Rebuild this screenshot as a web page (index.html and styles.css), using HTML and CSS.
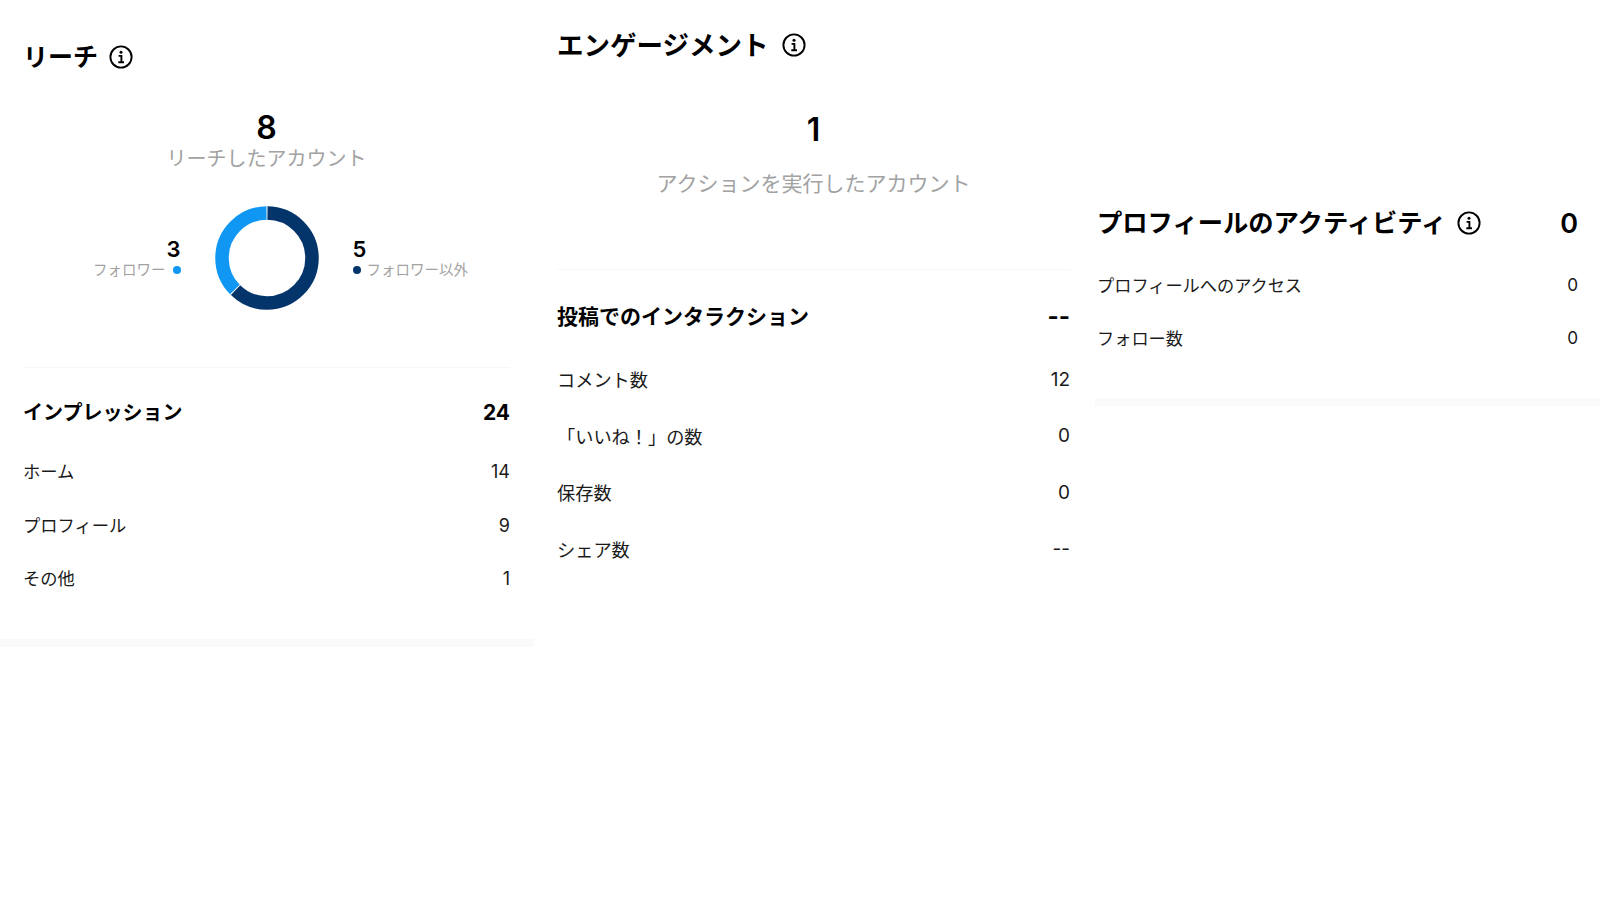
FILE: index.html
```html
<!DOCTYPE html>
<html lang="ja">
<head>
<meta charset="utf-8">
<title>インサイト</title>
<link rel="stylesheet" href="styles.css">
</head>
<body>
<svg class="defs" width="0" height="0" aria-hidden="true">
  <symbol id="info" viewBox="0 0 24 24">
    <circle class="info-ring" cx="12" cy="12" r="10.6"/>
    <circle class="info-dot" cx="12" cy="7.3" r="1.5"/>
    <path class="info-stem" d="M9.6 10.9H12.4V17M9.3 17.2H15"/>
  </symbol>
</svg>
<main class="page">
  <section class="col col-reach">
    <h2 class="title title-reach">リーチ <svg class="info"><use href="#info"/></svg></h2>
    <div class="big big-reach">8</div>
    <div class="sub sub-reach">リーチしたアカウント</div>
    <div class="chart">
      <div class="legend legend-left">
        <div class="legend-num">3</div>
        <div class="legend-label">フォロワー<span class="dot dot-light"></span></div>
      </div>
      <svg class="donut" viewBox="0 0 104 104">
        <circle class="seg seg-navy" cx="52" cy="52" r="45" pathLength="100" stroke-dasharray="62.5 37.5" transform="rotate(-90 52 52)"/>
        <circle class="seg seg-blue" cx="52" cy="52" r="45" pathLength="100" stroke-dasharray="37.5 62.5" stroke-dashoffset="-62.5" transform="rotate(-90 52 52)"/>
        <circle class="seg seg-gap" cx="52" cy="52" r="45" pathLength="100" stroke-dasharray="0.35 62.15 0.35 37.15" stroke-dashoffset="0.175" transform="rotate(-90 52 52)"/>
      </svg>
      <div class="legend legend-right">
        <div class="legend-num">5</div>
        <div class="legend-label"><span class="dot dot-navy"></span>フォロワー以外</div>
      </div>
    </div>
    <hr class="rule rule-reach">
    <div class="row head head-reach"><span class="head-text">インプレッション</span><span class="head-num">24</span></div>
    <div class="row r-reach first-reach"><span>ホーム</span><span class="num">14</span></div>
    <div class="row r-reach"><span>プロフィール</span><span class="num">9</span></div>
    <div class="row r-reach"><span>その他</span><span class="num">1</span></div>
  </section>
  <section class="col col-eng">
    <h2 class="title title-eng">エンゲージメント <svg class="info"><use href="#info"/></svg></h2>
    <div class="big big-eng">1</div>
    <div class="sub sub-eng">アクションを実行したアカウント</div>
    <hr class="rule rule-eng">
    <div class="row head head-eng"><span>投稿でのインタラクション</span><span class="dash">--</span></div>
    <div class="row r-eng first-eng"><span>コメント数</span><span class="num-eng">12</span></div>
    <div class="row r-eng"><span>「いいね！」の数</span><span class="num-eng">0</span></div>
    <div class="row r-eng"><span>保存数</span><span class="num-eng">0</span></div>
    <div class="row r-eng"><span>シェア数</span><span class="num-eng">--</span></div>
  </section>
  <section class="col col-prof">
    <div class="row title title-prof">
      <span class="title-left">プロフィールのアクティビティ <svg class="info"><use href="#info"/></svg></span>
      <span class="prof-num">0</span>
    </div>
    <div class="row r-prof first-prof"><span>プロフィールへのアクセス</span><span>0</span></div>
    <div class="row r-prof"><span>フォロー数</span><span>0</span></div>
  </section>
</main>
</body>
</html>
```

FILE: styles.css
```css
* { box-sizing: border-box; }
html, body { margin: 0; height: 100%; background: #fff; }
body {
  font-family: Inter, "Noto Sans CJK JP", sans-serif;
  color: #000;
  overflow: hidden;
}
.defs { position: absolute; }
.page { display: flex; align-items: flex-start; width: 1600px; height: 900px; }
.col { display: flex; flex-direction: column; }

.col-reach {
  width: 534px;
  padding: 42px 24px 0 23px;
  height: 647px;
  border-bottom: 8px solid #fafafa;
}
.col-eng { width: 561px; padding: 30px 25px 0 23px; }
.col-prof {
  width: 505px;
  margin-top: 208px;
  height: 198px;
  padding: 0 22px 0 2px;
  border-bottom: 8px solid #fafafa;
}

.title {
  margin: 0;
  font-weight: 700;
  font-size: 25px;
  line-height: 30px;
  color: #000;
  display: flex;
  align-items: center;
}
.title-eng { font-size: 26.5px; }
.title-eng .info { margin-left: 14px; }
.title-prof { font-size: 25.3px; }
.title-left { display: flex; align-items: center; }
.info { width: 24px; height: 24px; margin-left: 11px; flex: none; }
.info-ring { fill: none; stroke: #000; stroke-width: 1.9; }
.info-dot { fill: #000; }
.info-stem { fill: none; stroke: #000; stroke-width: 1.9; }

.big { text-align: center; font-weight: 600; font-size: 32px; line-height: 38px; color: #000; }
.big-reach { margin-top: 37px; }
.big-eng { margin-top: 51px; }
.sub { text-align: center; font-size: 20px; line-height: 28px; color: #a2a2a2; }
.sub-reach { margin-top: -2px; }
.sub-eng { margin-top: 21px; font-size: 21px; }

.chart {
  position: relative;
  display: flex;
  justify-content: center;
  margin-top: 33px;
}
.donut { display: block; width: 104px; height: 104px; }
.seg { fill: none; stroke-width: 13.5; }
.seg-navy { stroke: #03356b; }
.seg-blue { stroke: #1097f3; }
.seg-gap { stroke: #fff; }

.legend { width: 140px; padding-top: 29px; }
.legend-left { text-align: right; margin-right: 34px; }
.legend-right { text-align: left; margin-left: 34px; }
.legend-num { font-size: 22px; line-height: 28px; font-weight: 600; color: #000; }
.legend-label {
  display: flex;
  align-items: center;
  margin-top: -3px;
  font-size: 14.5px;
  line-height: 20px;
  color: #a2a2a2;
  white-space: nowrap;
}
.legend-left .legend-label { justify-content: flex-end; }
.dot { width: 8px; height: 8px; border-radius: 50%; flex: none; }
.dot-light { background: #1097f3; margin-left: 7px; }
.dot-navy { background: #03356b; margin-right: 6px; }

.rule { width: 100%; height: 1px; margin: 0; border: 0; background: #f7f7f7; }
.rule-reach { margin-top: 57px; }
.rule-eng { margin-top: 71px; }

.row { display: flex; justify-content: space-between; align-items: center; }
.head { font-weight: 700; font-size: 21px; line-height: 30px; color: #000; }
.head-reach { margin-top: 30px; }
.head-text { font-size: 20px; }
.head-eng { margin-top: 32px; }
.dash { font-size: 24px; }
.r-reach { height: 53.5px; font-size: 17.3px; color: #1a1a1a; }
.num { font-size: 18px; position: relative; top: 1px; }
.first-reach { margin-top: 16px; }
.r-eng { height: 56.5px; font-size: 18.2px; color: #1a1a1a; }
.num-eng { font-size: 19px; }
.first-eng { margin-top: 19px; }
.title-prof { height: 30px; }
.prof-num { font-size: 27px; font-weight: 600; position: relative; top: 1px; }
.r-prof { height: 53px; font-size: 17.2px; font-weight: 400; color: #1a1a1a; }
.first-prof { margin-top: 20px; }
```
